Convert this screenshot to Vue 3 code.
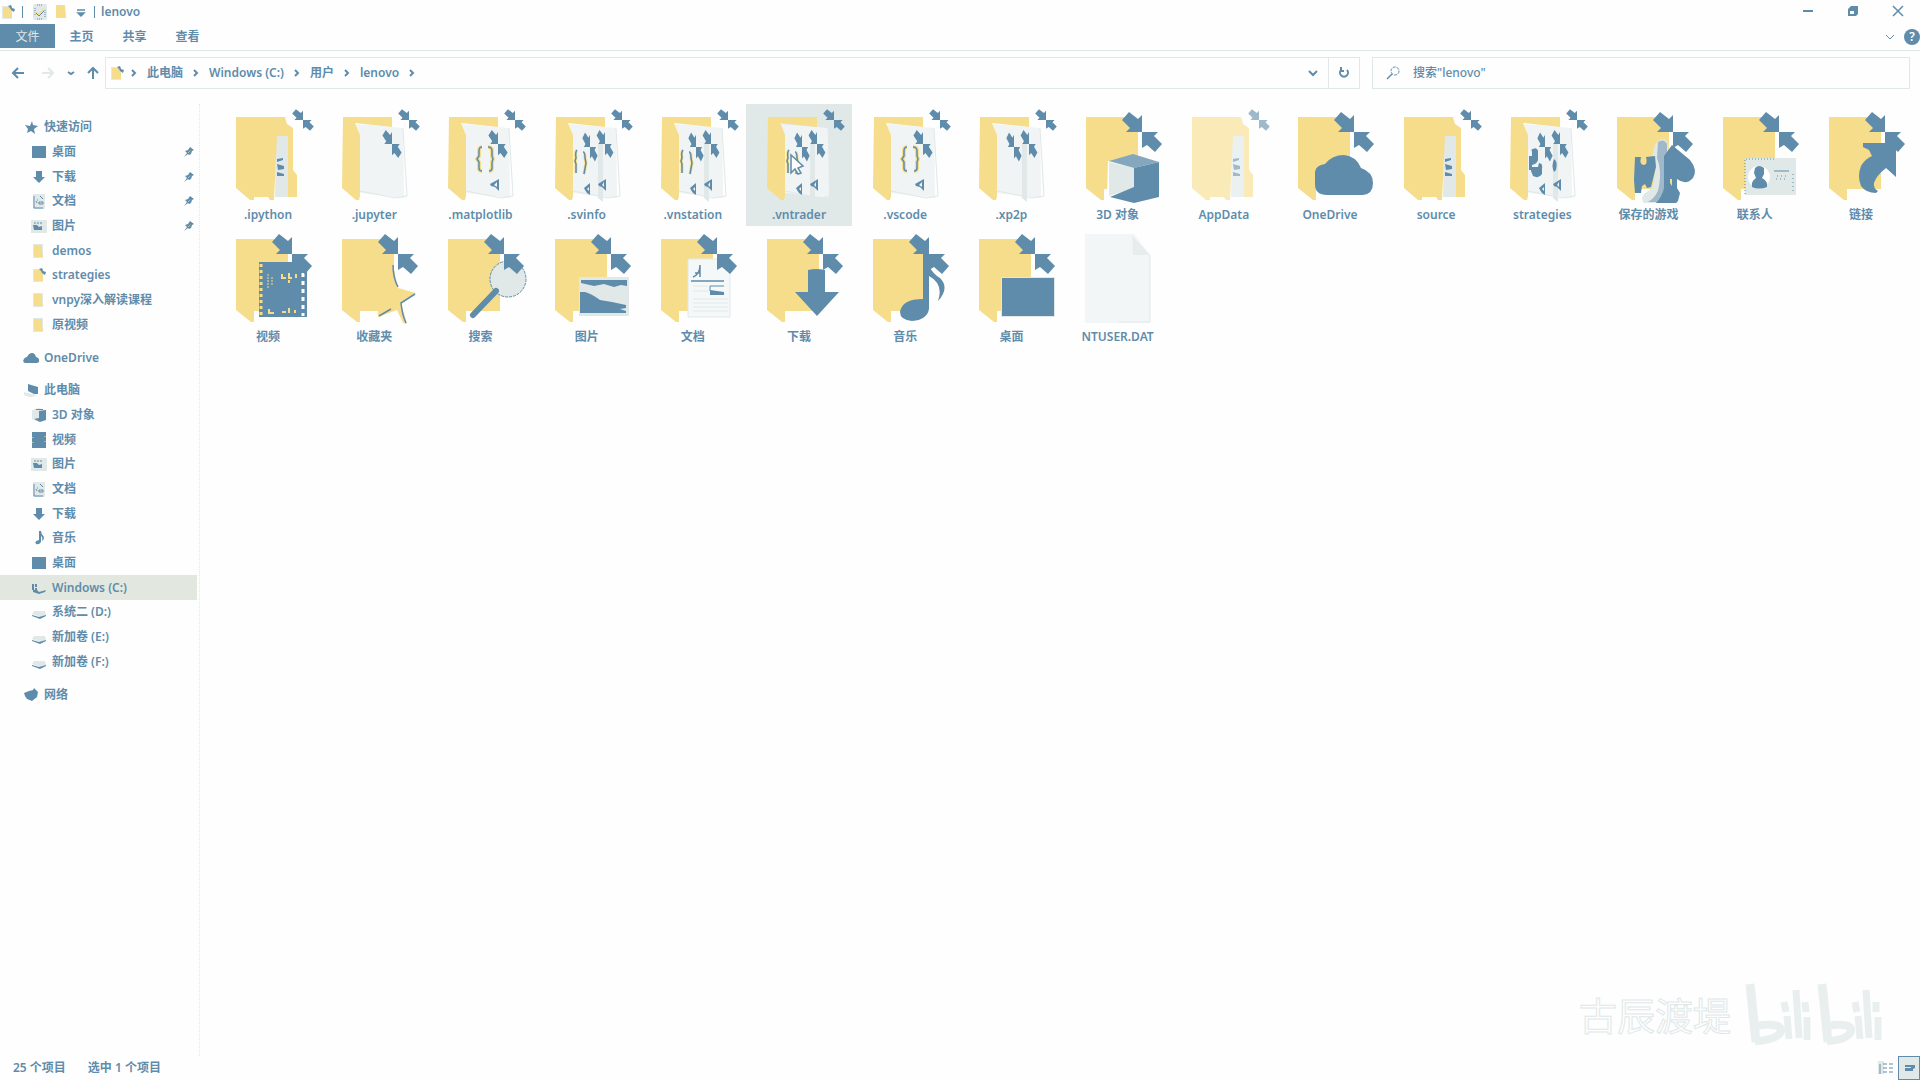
<script setup>
import { ref } from 'vue'

const tabs = ['主页', '共享', '查看']
const crumbs = ['此电脑', 'Windows (C:)', '用户', 'lenovo']
const query = ref('')

const groups = [
  [
    { label: '快速访问', icon: 'n-star', root: true },
    { label: '桌面', icon: 'n-desktop', pinned: true },
    { label: '下载', icon: 'n-down', pinned: true },
    { label: '文档', icon: 'n-doc', pinned: true },
    { label: '图片', icon: 'n-pic', pinned: true },
    { label: 'demos', icon: 'n-folder' },
    { label: 'strategies', icon: 'n-folder-sync' },
    { label: 'vnpy深入解读课程', icon: 'n-folder' },
    { label: '原视频', icon: 'n-folder' },
  ],
  [{ label: 'OneDrive', icon: 'n-cloud', root: true }],
  [
    { label: '此电脑', icon: 'n-pc', root: true },
    { label: '3D 对象', icon: 'n-cube' },
    { label: '视频', icon: 'n-film' },
    { label: '图片', icon: 'n-pic' },
    { label: '文档', icon: 'n-doc' },
    { label: '下载', icon: 'n-down' },
    { label: '音乐', icon: 'n-music' },
    { label: '桌面', icon: 'n-desktop' },
    { label: 'Windows (C:)', icon: 'n-windisk', active: true },
    { label: '系统二 (D:)', icon: 'n-disk' },
    { label: '新加卷 (E:)', icon: 'n-disk' },
    { label: '新加卷 (F:)', icon: 'n-disk' },
  ],
  [{ label: '网络', icon: 'n-net', root: true }],
]

const files = [
  { name: '.ipython', layers: ['f-full', 'pair-small'] },
  { name: '.jupyter', layers: ['f-open', 'in-one', 'pair-small'] },
  { name: '.matplotlib', layers: ['f-open', 'in-one', 'braces', 'vs-one', 'pair-small'] },
  { name: '.svinfo', layers: ['f-open', 'fold', 'in-two', 'braces-slim', 'vs-two', 'pair-small'] },
  { name: '.vnstation', layers: ['f-open', 'fold', 'in-two', 'braces-slim', 'vs-two', 'pair-small'] },
  { name: '.vntrader', layers: ['f-open', 'fold', 'in-two', 'braces-slim', 'vs-two', 'pair-small', 'pointer'], selected: true },
  { name: '.vscode', layers: ['f-open', 'in-one', 'braces', 'vs-one', 'pair-small'] },
  { name: '.xp2p', layers: ['f-open', 'fold', 'in-two', 'pair-small'] },
  { name: '3D 对象', layers: ['f-known', 'k-cube', 'pair-large'] },
  { name: 'AppData', layers: ['f-full', 'pair-small'], hidden: true },
  { name: 'OneDrive', layers: ['f-known', 'k-cloud', 'pair-large'] },
  { name: 'source', layers: ['f-full', 'pair-small'] },
  { name: 'strategies', layers: ['f-open', 'fold', 'in-two', 'python', 'vs-two', 'pair-small'] },
  { name: '保存的游戏', layers: ['f-known', 'k-games', 'pair-large'] },
  { name: '联系人', layers: ['f-known', 'k-card', 'pair-large'] },
  { name: '链接', layers: ['f-known', 'k-link', 'pair-large'] },
  { name: '视频', layers: ['f-known', 'k-film', 'pair-large'] },
  { name: '收藏夹', layers: ['f-known', 'k-star', 'pair-large'] },
  { name: '搜索', layers: ['f-known', 'k-search', 'pair-large'] },
  { name: '图片', layers: ['f-known', 'k-pic', 'pair-large'] },
  { name: '文档', layers: ['f-known', 'k-doc', 'pair-large'] },
  { name: '下载', layers: ['f-known', 'k-down', 'pair-large'] },
  { name: '音乐', layers: ['f-known', 'k-music', 'pair-large'] },
  { name: '桌面', layers: ['f-known', 'k-desktop', 'pair-large'] },
  { name: 'NTUSER.DAT', layers: ['file'] },
]
</script>

<template>
  <div class="explorer">
    <svg class="sprite" aria-hidden="true">
      <defs>
        <!-- sync arrows that meet at the origin -->
        <g id="pair" fill="#5f8cab">
          <path d="M0 0V-17L-4 -13L-13 -20L-20 -12L-12 -4L-16 0Z" />
          <path d="M0 0V16L5 13L13 20L20 12L12 4L16 0Z" />
        </g>
        <g id="pair-large"><use href="#pair" x="77" y="28" /></g>
        <g id="pair-small"><use href="#pair" transform="translate(88 16) scale(.54)" /></g>
        <g id="in-one"><use href="#pair" transform="translate(71 40) scale(.48 .7)" /></g>
        <g id="in-two">
          <use href="#pair" transform="translate(56 43) scale(.38 .72)" />
          <use href="#pair" transform="translate(71 40) scale(.42 .7)" />
        </g>

        <!-- folder bodies -->
        <g id="f-full">
          <path d="M61 31H74V93H60Z" fill="#e0e8e8" />
          <path d="M21 13H70L72 20L78 24V66L82 71V93H73V32H62L59 96H55L53 93H39V96H35L21 84Z" fill="#f6dd8b" />
          <path d="M62 55L68 54V56L62 58ZM62 60L69 62V65L63 66ZM62 68L69 70V72H62Z" fill="#5f8cab" />
        </g>
        <g id="f-open">
          <path d="M35 20L82 24L83 94L39 89V31Z" fill="#f0f4f4" />
          <path d="M82 24L86 92L74 94L39 87" fill="none" stroke="#e0e8e8" />
          <path d="M22 13H71V23L34 19L39 31V92L38 96H35L21 84Z" fill="#f6dd8b" />
        </g>
        <g id="fold"><path d="M64 40H69V98L64 94Z" fill="#e0e8e8" /></g>
        <g id="f-known">
          <path d="M21 13H60L73 28V85H39V96H36L21 84Z" fill="#f6dd8b" />
        </g>
        <g id="file">
          <path d="M20 8H69L85 29V97H20Z" fill="#f3f6f6" />
          <path d="M67 9L68 29H85" fill="#e7eded" />
          <path d="M85 29V96H54" fill="none" stroke="#e0e8e8" />
        </g>

        <!-- contents seen inside open folders -->
        <g id="braces" fill="none">
          <path d="M55 43Q52 43 52 47V52L50 55L52 58V64Q52 67 55 67M61 43Q65 43 65 47V52L66 55L65 58V64Q65 67 62 67" stroke="#f6dd8b" stroke-width="4" />
          <path d="M55 43Q52 43 52 47V52L50 55L52 58V64Q52 67 55 67M61 43Q65 43 65 47V52L66 55L65 58V64Q65 67 62 67" stroke="#5f8cab" stroke-width="1.5" />
        </g>
        <g id="braces-slim" fill="none">
          <path d="M43 46Q41 48 42 54L41 57L42 60V69M49 48Q51 48 51 54L52 59L50 70" stroke="#f6dd8b" stroke-width="3" />
          <path d="M43 46Q41 48 42 54L41 57L42 60V69M49 48Q51 48 51 54L52 59L50 70" stroke="#5f8cab" stroke-width="1.5" />
        </g>
        <g id="vs-one"><path d="M63 80L72 75V87L68 83L64 82ZM67 81L70 83V78Z" fill="#5f8cab" fill-rule="evenodd" /></g>
        <g id="vs-two" fill="#5f8cab" fill-rule="evenodd">
          <path d="M64 80L72 75V87L68 83L65 82ZM68 81L70 83V78Z" />
          <path d="M50 84L56 79V91L53 89L51 86ZM53 85L55 87V83Z" />
        </g>
        <g id="python" fill="#5f8cab">
          <path d="M42 46Q48 42 49 47V56Q48 60 43 61V66H40V52H43V47Z" />
          <path d="M50 59Q54 59 53 65V70Q50 75 44 72L42 67V63H49Z" />
          <path d="M65 55Q69 57 67 66L65 68Q62 62 65 55Z" />
        </g>
        <g id="pointer"><path d="M45 51V69L49 65L52 70L55 69L52 64L57 62Z" fill="#fff" stroke="#5f8cab" stroke-width="1.5" /></g>

        <!-- marks of the known folders -->
        <g id="k-cube">
          <path d="M43 57L69 63V99L42 93Z" fill="#fff" />
          <path d="M44 58L69 64V84L44 92Z" fill="#e0e8e8" />
          <path d="M68 50L94 58L69 64L44 57Z" fill="#85a7bd" />
          <path d="M69 64L94 58V93L69 99L45 93L69 83Z" fill="#5f8cab" />
        </g>
        <g id="k-cloud"><path d="M50 91Q38 91 38 80V68Q39 61 48 60Q55 51 67 51Q79 52 84 64Q96 68 96 79Q96 90 86 91Z" fill="#5f8cab" /></g>
        <g id="k-games">
          <path d="M57 50Q58 37 66 35Q72 36 72 42V99H48Q44 94 48 90L56 84Q61 70 57 54Z" fill="#e0e8e8" />
          <path d="M62 38Q68 34 71 40V98H52Q62 92 63 82Q66 66 61 54Z" fill="#9fb9cb" />
          <path d="M76 41L94 56Q102 66 97 74Q90 82 81 75V84L84 89L82 97L80 99H60Q66 93 68 84V52Z" fill="#5f8cab" />
          <path d="M39 53H45Q43 61 48 61Q52 60 50 53L59 52L60 63L55 83L51 84L49 80L46 82L45 89H39L38 76Z" fill="#5f8cab" />
          <path d="M74 75H76V82L74 79Z" fill="#f6dd8b" />
        </g>
        <g id="k-card">
          <path d="M43 54H94V91H43Z" fill="#e0e8e8" />
          <path d="M43 90V55H72" fill="none" stroke="#5f8cab" stroke-dasharray="1 2" />
          <circle cx="57" cy="73" r="11" fill="#fff" />
          <path d="M53 64Q57 60 62 64V70L60 74Q66 77 65 83Q57 86 50 83Q49 77 54 74L52 69Z" fill="#5f8cab" />
          <path d="M72 67H87" stroke="#5f8cab" />
          <path d="M75 72H87M74 75H85M91 70V90" stroke="#5f8cab" stroke-dasharray="1 3" fill="none" />
        </g>
        <g id="k-link"><path d="M55 39H77L88 36V73L78 64Q68 72 66 79Q65 84 70 87L68 89Q58 89 53 82Q49 72 53 62Q57 55 64 52L61 46L55 43Z" fill="#5f8cab" /></g>
        <g id="k-film">
          <path d="M44 36H92V91H44Z" fill="#5f8cab" />
          <path d="M46 38V90" stroke="#f6dd8b" stroke-width="3" stroke-dasharray="3 3" />
          <path d="M88 47V90" stroke="#fff" stroke-width="3" stroke-dasharray="4 4" />
          <path d="M53 48V62M57 51V60" stroke="#f6dd8b" stroke-dasharray="2 1" />
          <path d="M67 48V52H71M74 47V52H77M81 48V52M74 54V57M54 83V87H59M67 86H71M74 82V87M80 84V87" fill="none" stroke="#f6dd8b" stroke-width="2" />
        </g>
        <g id="k-star">
          <path d="M72 39L77 62L95 67L80 77L86 98L82 97L76 84L57 91L56 60Z" fill="#f6dd8b" />
          <path d="M72 39Q72 52 77 61M94 68L80 77Q81 88 85 97M70 83L58 90" fill="none" stroke="#5f8cab" stroke-width="1.5" />
        </g>
        <g id="k-search">
          <circle cx="81" cy="53" r="18" fill="#e0e8e8" stroke="#5f8cab" stroke-dasharray="3 1" />
          <path d="M69 65L46 89" stroke="#5f8cab" stroke-width="6" stroke-linecap="round" />
        </g>
        <g id="k-pic">
          <path d="M45 51H95V90H45Z" fill="#e0e8e8" />
          <path d="M47 54H93V60L87 59L80 61L70 58L60 60L47 57Z" fill="#5f8cab" />
          <path d="M51 66Q58 68 66 74L78 76L92 79V82L86 83L92 85V87H46V66Z" fill="#5f8cab" />
        </g>
        <g id="k-doc">
          <path d="M48 33H90V91H48Z" fill="#f5f8f8" stroke="#e0e8e8" />
          <path d="M53 73H88M53 77H88M53 81H88M53 85H88M53 60H68M53 65H68" stroke="#e0e8e8" />
          <path d="M53 51Q60 48 60 39M60 39V51M55 47H60M51 55H84" fill="none" stroke="#5f8cab" stroke-width="1.5" />
          <path d="M70 65V60H84" fill="none" stroke="#5f8cab" />
          <path d="M70 64L84 66V69H70Z" fill="#5f8cab" />
        </g>
        <g id="k-down"><path d="M62 44Q70 42 79 44V66H93L71 90L49 66H62Z" fill="#5f8cab" /></g>
        <g id="k-music">
          <path d="M71 20H77V40Q81 48 88 52Q98 62 86 75Q92 58 77 50V83Q75 94 60 95Q48 94 48 86Q50 73 71 73Z" fill="#5f8cab" />
        </g>
        <g id="k-desktop"><path d="M43 51H97V91H43Z" fill="#e0e8e8" /><path d="M44 52H96V90H44Z" fill="#5f8cab" /></g>

        <!-- 16px icons of the navigation tree -->
        <g id="n-star"><path d="M9 2L10 6L15 7L11 10L12 15L8 12L4 14L5 10L2 6L7 7Z" fill="#5f8cab" /></g>
        <g id="n-desktop"><path d="M1 2H15V14H1Z" fill="#5f8cab" /></g>
        <g id="n-down"><path d="M5 2H11V8H14L8 14L2 8H5Z" fill="#5f8cab" /></g>
        <g id="n-doc">
          <rect x="2" y="1" width="12" height="15" rx="1" fill="#e0e8e8" />
          <path d="M3 3V15H12M9 3L12 6M6 7H7M8 9H12V11H8ZM5 8L6 10" fill="none" stroke="#5f8cab" />
        </g>
        <g id="n-pic">
          <path d="M0 2H16V15H0Z" fill="#e0e8e8" />
          <path d="M3 5H12" stroke="#5f8cab" stroke-dasharray="2 1" />
          <path d="M2 7H6L8 9L11 8V12H3Z" fill="#5f8cab" />
        </g>
        <g id="n-folder"><path d="M2 1H12V15H2Z" fill="#e0e8e8" /><path d="M3 2H11V9L12 14H4L3 13Z" fill="#f6dd8b" /></g>
        <g id="n-folder-sync">
          <path d="M2 2H12V15H2Z" fill="#e0e8e8" />
          <path d="M3 3H10L12 6V14H4L3 13Z" fill="#f6dd8b" />
          <path d="M8 2L11 1L12 4L15 5L14 8L11 6L10 4Z" fill="#5f8cab" />
        </g>
        <g id="n-cloud"><path d="M2 13Q-1 12 1 9Q2 7 4 7Q6 3 9 3Q12 3 13 7Q17 8 16 12L14 13Z" fill="#5f8cab" /></g>
        <g id="n-pc">
          <path d="M1 10L8 12L14 13Q8 17 1 13Z" fill="#e0e8e8" />
          <path d="M5 2L15 5V12L11 12L5 9Z" fill="#5f8cab" />
        </g>
        <g id="n-cube">
          <path d="M1 3L8 1L15 3V12L8 15L1 12Z" fill="#e0e8e8" />
          <path d="M8 4L15 3V13L9 15L3 12L8 11ZM5 2H12V3H5Z" fill="#5f8cab" />
        </g>
        <g id="n-film"><path d="M1 0H15V16H1Z" fill="#5f8cab" /><path d="M2 5V12M14 4V14" stroke="#f6dd8b" stroke-dasharray="1 4" /></g>
        <g id="n-music"><path d="M8 1H10Q10 4 13 7Q13 10 11 11Q12 7 10 6V12Q8 15 5 14Q3 11 8 10Z" fill="#5f8cab" /></g>
        <g id="n-disk"><path d="M3 7H14L15 11L9 13L1 10Z" fill="#e0e8e8" /><path d="M1 11L8 13L15 11V12L9 15L1 12Z" fill="#5f8cab" /></g>
        <g id="n-windisk"><path d="M1 4H3V10H1ZM4 4H6V7H4ZM4 8H6V10L8 12L15 10L14 12L8 14L2 12V10H4Z" fill="#5f8cab" /></g>
        <g id="n-net"><path d="M1 6L6 4L10 3L11 1L15 5L14 10L9 14L4 12L2 9Z" fill="#5f8cab" /></g>
      </defs>
    </svg>

    <header class="titlebar">
      <div class="quick">
        <svg class="ico" viewBox="0 0 16 16"><use href="#n-folder-sync" /></svg>
        <span class="bar"></span>
        <button class="plain" aria-label="属性">
          <svg class="ico" viewBox="0 0 16 16"><rect x="1" y="0" width="14" height="16" rx="2" fill="#e0e8e8" /><path d="M5 1H11M3 4V12M13 6V13M5 15H11" stroke="#5f8cab" stroke-dasharray="1 1" fill="none" /><path d="M3 8L7 11L12 5" fill="none" stroke="#f6dd8b" stroke-width="2" /><path d="M4 9L7 12L12 7" fill="none" stroke="#5f8cab" /></svg>
        </button>
        <button class="plain" aria-label="新建文件夹">
          <svg class="ico" viewBox="0 0 16 16"><path d="M3 1H12L13 14H3Z" fill="#f6dd8b" /></svg>
        </button>
        <button class="plain" aria-label="自定义快速访问工具栏">
          <svg class="ico" viewBox="0 0 16 16"><path d="M3 6H11M4 9H10L7 12Z" fill="#5f8cab" stroke="#5f8cab" stroke-width="1.5" /></svg>
        </button>
        <span class="bar"></span>
        <span class="title">lenovo</span>
      </div>
      <div class="window">
        <button aria-label="最小化"><svg viewBox="0 0 12 12"><path d="M1 6H11" stroke="#5f8cab" stroke-width="2" /></svg></button>
        <button aria-label="还原"><svg viewBox="0 0 12 12"><path d="M1 4L4 1H11V9L9 11H1ZM3 6V9H7V6Z" fill="#5f8cab" fill-rule="evenodd" /></svg></button>
        <button aria-label="关闭"><svg viewBox="0 0 12 12"><path d="M1 1L11 11M11 1L1 11" stroke="#5f8cab" stroke-width="1.5" /></svg></button>
      </div>
    </header>

    <nav class="ribbon">
      <button class="tab file">文件</button>
      <button v-for="t in tabs" :key="t" class="tab">{{ t }}</button>
      <span class="spacer"></span>
      <button class="plain" aria-label="展开功能区"><svg class="ico" viewBox="0 0 16 16"><path d="M4 6L8 10L12 6" fill="none" stroke="#5f8cab" /></svg></button>
      <button class="help" aria-label="帮助">?</button>
    </nav>

    <div class="navbar">
      <div class="arrows">
        <button class="plain" aria-label="后退"><svg class="ico" viewBox="0 0 16 16"><path d="M14 8H3M8 3L3 8L8 13" fill="none" stroke="#5f8cab" stroke-width="2" /></svg></button>
        <button class="plain" aria-label="前进"><svg class="ico" viewBox="0 0 16 16"><path d="M2 8H13M8 3L13 8L8 13" fill="none" stroke="#e0e8e8" stroke-width="2" /></svg></button>
        <button class="plain" aria-label="最近位置"><svg class="ico small" viewBox="0 0 8 16"><path d="M1 7L4 9L7 7" fill="none" stroke="#5f8cab" stroke-width="2" /></svg></button>
        <button class="plain" aria-label="上移"><svg class="ico" viewBox="0 0 16 16"><path d="M7 14V3M2 8L7 3L12 8" fill="none" stroke="#5f8cab" stroke-width="2" /></svg></button>
      </div>
      <div class="address">
        <svg class="ico" viewBox="0 0 16 16"><use href="#n-folder-sync" /></svg>
        <template v-for="c in crumbs" :key="c">
          <svg class="chev" viewBox="0 0 8 16"><path d="M2 5L5 8L2 11" fill="none" stroke="#5f8cab" stroke-width="2" /></svg>
          <button class="crumb">{{ c }}</button>
        </template>
        <svg class="chev" viewBox="0 0 8 16"><path d="M2 5L5 8L2 11" fill="none" stroke="#5f8cab" stroke-width="2" /></svg>
        <span class="spacer"></span>
        <button class="plain drop" aria-label="以前的位置"><svg class="ico" viewBox="0 0 16 16"><path d="M4 6L8 10L12 6" fill="none" stroke="#5f8cab" stroke-width="2" /></svg></button>
        <button class="plain refresh" aria-label="刷新"><svg class="ico" viewBox="0 0 16 16"><path d="M5 5A4 4 0 1 0 11 5M5 2V6H8" fill="none" stroke="#5f8cab" stroke-width="2" /></svg></button>
      </div>
      <label class="search">
        <svg class="ico" viewBox="0 0 16 16"><path d="M2 14L7 9" stroke="#5f8cab" stroke-width="1.5" /><circle cx="10" cy="6" r="4" fill="none" stroke="#5f8cab" stroke-dasharray="3 1" /></svg>
        <input v-model="query" type="text" placeholder="搜索&quot;lenovo&quot;" aria-label="搜索" />
      </label>
    </div>

    <div class="body">
      <aside class="tree">
        <ul v-for="(g, gi) in groups" :key="gi" :class="['group', { many: g.length > 1, long: g.length > 10 }]">
          <li v-for="n in g" :key="n.label">
            <a href="#" :class="{ root: n.root, active: n.active }">
              <svg class="ico" viewBox="0 0 16 16"><use :href="'#' + n.icon" /></svg>
              <span>{{ n.label }}</span>
              <svg v-if="n.pinned" class="pin" viewBox="0 0 12 12"><path d="M7 1L11 4L9 5L8 8L6 9L5 8L1 11L4 7L2 5L5 4Z" fill="#5f8cab" /><path d="M5 7L8 4" stroke="#f6dd8b" stroke-dasharray="1 1" /></svg>
            </a>
          </li>
        </ul>
      </aside>

      <main class="files">
        <button v-for="f in files" :key="f.name + f.layers[1]" :class="['tile', { selected: f.selected, ghost: f.hidden }]">
          <svg viewBox="0 0 106 100"><use v-for="l in f.layers" :key="l" :href="'#' + l" /></svg>
          <span>{{ f.name }}</span>
        </button>
      </main>
    </div>

    <footer class="status">
      <span>25 个项目</span>
      <span>选中 1 个项目</span>
      <span class="spacer"></span>
      <button class="view" aria-label="详细信息"><svg viewBox="0 0 22 24"><path d="M2 5H8V18H2Z" fill="#e0e8e8" /><path d="M4 8V18M7 8H11M7 12H11M7 16H11" stroke="#5f8cab" fill="none" /><path d="M13 8H17M13 12H17M13 16H17" stroke="#5f8cab" /></svg></button>
      <button class="view on" aria-label="大图标"><svg viewBox="0 0 22 24"><path d="M7 9H17V12L15 13V15H7V12H13V11H7Z" fill="#5f8cab" /></svg></button>
    </footer>

    <div class="watermark">
      <span>古辰渡堤</span>
      <svg viewBox="0 0 142 66" fill="none" stroke="#e9efef" stroke-linecap="butt">
        <path d="M6 2L12 60M78 2L84 60" stroke-width="9" />
        <path d="M11 44Q38 40 37 49Q34 58 11 59M83 44Q108 40 107 49Q104 58 83 59" stroke-width="8" />
        <path d="M43 34L45 57M52 8L55 56M63 35V58M114 34L116 57M122 8L125 56M134 35V58" stroke-width="7" />
        <path d="M40 20L42 30M61 20L62 30M111 20L113 30M132 20V30" stroke-width="7" />
      </svg>
    </div>
  </div>
</template>

<style>
body {
  margin: 0;
  background: #fefefe;
}
</style>

<style scoped>
.explorer {
  position: relative;
  display: flex;
  flex-direction: column;
  min-height: 100vh;
  overflow: hidden;
  color: #5f8cab;
  font: 600 12px/16px "Noto Sans", "Noto Sans CJK SC", sans-serif;
}
.sprite {
  position: absolute;
  width: 0;
  height: 0;
}
button {
  margin: 0;
  padding: 0;
  border: 0;
  background: none;
  color: inherit;
  font: inherit;
}
svg {
  display: block;
  flex: none;
}
.ico {
  width: 16px;
  height: 16px;
}
.ico.small {
  width: 8px;
}
.spacer {
  flex: 1;
}
.titlebar {
  display: flex;
  justify-content: space-between;
  height: 24px;
}
.quick {
  display: flex;
  align-items: center;
  gap: 5px;
}
.bar {
  width: 1px;
  height: 12px;
  margin: 0 4px 0 1px;
  background: #5f8cab;
}
.plain + .bar {
  margin: 0 1px 0 -1px;
}
.window {
  display: flex;
}
.window button {
  display: grid;
  place-items: center;
  width: 45px;
  height: 22px;
}
.window svg {
  width: 12px;
  height: 12px;
}
.ribbon {
  display: flex;
  height: 26px;
  border-bottom: 1px solid #e0e8e8;
}
.tab {
  width: 53px;
  height: 24px;
  padding-top: 2px;
}
.tab.file {
  width: 55px;
  background: #5f8cab;
  color: #e0e8e8;
  font-weight: 400;
}
.ribbon .plain {
  height: 26px;
}
.help {
  width: 16px;
  height: 16px;
  margin: 5px 0 0 6px;
  border-radius: 8px;
  background: #5f8cab;
  color: #fff;
}
.navbar {
  display: flex;
  height: 32px;
  padding: 6px 10px 15px;
}
.arrows {
  display: flex;
  align-items: center;
  gap: 14px;
  width: 95px;
}
.arrows .plain:nth-child(n + 3) {
  margin-left: -3px;
}
.address {
  display: flex;
  align-items: center;
  flex: 1;
  margin-right: 12px;
  padding-left: 3px;
  border: 1px solid #e0e8e8;
}
.chev {
  width: 8px;
  height: 16px;
  margin: 0 9px;
}
.address > .ico {
  margin-right: -4px;
}
.drop {
  padding: 0 7px;
}
.refresh {
  align-self: stretch;
  padding: 0 7px;
  border-left: 1px solid #e0e8e8;
}
.search {
  display: flex;
  align-items: center;
  gap: 12px;
  width: calc(28% + 6px);
  box-sizing: border-box;
  padding-left: 12px;
  border: 1px solid #e0e8e8;
}
.search input {
  flex: 1;
  min-width: 0;
  padding: 0;
  border: 0;
  outline: 0;
  background: none;
  color: inherit;
  font: inherit;
  font-weight: 500;
}
.search input::placeholder {
  color: #5f8cab;
  opacity: 1;
}
.body {
  display: flex;
  flex: 1;
}
.tree {
  display: flex;
  flex-direction: column;
  gap: 8px;
  width: 199px;
  padding-top: 11px;
  border-right: 1px dotted #e0e8e8;
}
.group {
  display: grid;
  grid-auto-rows: 1fr;
  min-height: 25px;
  margin: 0;
  padding: 0;
  list-style: none;
}
.group.many {
  min-height: 222px;
}
.group.long {
  min-height: 296px;
}
.group a {
  display: flex;
  align-items: center;
  gap: 5px;
  height: 100%;
  margin-right: 2px;
  padding: 0 2px 0 31px;
  color: inherit;
  text-decoration: none;
}
.group a.root {
  padding-left: 23px;
}
.group a.active {
  background: #e2e8e0;
}
.pin {
  width: 12px;
  height: 12px;
  margin-left: auto;
}
.files {
  display: grid;
  grid-template-columns: repeat(auto-fill, minmax(106px, 1fr));
  grid-auto-rows: 122px;
  align-content: start;
  flex: 1;
  padding: 0 6px 0 15px;
}
.tile {
  display: flex;
  flex-direction: column;
  align-items: center;
}
.tile svg {
  width: 106px;
  height: 100px;
}
.tile span {
  margin-top: 3px;
}
.tile.selected {
  background: #e0e8e8;
}
.tile.ghost svg {
  opacity: 0.6;
}
.status {
  display: flex;
  align-items: center;
  gap: 22px;
  height: 24px;
  padding-left: 13px;
}
.view {
  width: 22px;
  height: 24px;
  box-sizing: border-box;
}
.view + .view {
  margin-left: -22px;
}
.view svg {
  width: 22px;
  height: 24px;
}
.view.on {
  border: 1px solid #5f8cab;
  background: #e0e8e8;
}
.view.on svg {
  margin: -1px;
}
.watermark {
  position: absolute;
  right: 34px;
  bottom: 32px;
  display: flex;
  align-items: center;
  gap: 13px;
  color: #fefefe;
  font-size: 38px;
  font-weight: 400;
  line-height: 48px;
  -webkit-text-stroke: 1px #e0e8e8;
  pointer-events: none;
}
.watermark svg {
  width: 142px;
  height: 66px;
}
</style>
